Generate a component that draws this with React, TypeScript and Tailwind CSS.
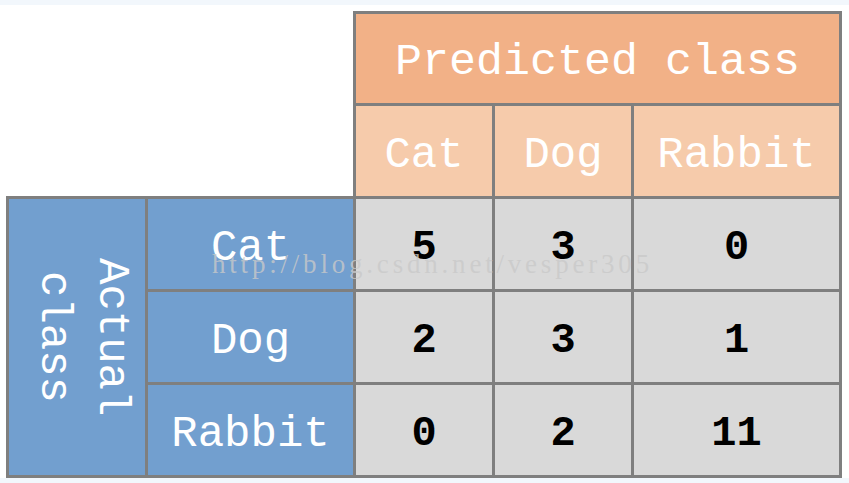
const cols = ["Cat", "Dog", "Rabbit"]
const rows: [string, number[]][] = [
  ["Cat", [5, 3, 0]],
  ["Dog", [2, 3, 1]],
  ["Rabbit", [0, 2, 11]],
]

const mono = "font-['Liberation_Mono','Courier_New',monospace]"

export default function App() {
  return (
    <div className="relative w-[849px] h-[483px] bg-white overflow-hidden">
      <div className="h-[5px] bg-[#f2f7fc]" />
      <div className="pl-[6px] pt-[6px]">
        <table className={`border-collapse table-fixed ${mono}`}>
          <colgroup>
            <col className="w-[139px]" />
            <col className="w-[208px]" />
            <col className="w-[139px]" />
            <col className="w-[139px]" />
            <col className="w-[208px]" />
          </colgroup>
          <tbody>
            <tr className="h-[92px]">
              <td colSpan={2} rowSpan={2} className="border-0 p-0" />
              <td
                colSpan={3}
                className="border-[3px] border-[#7f7f7f] bg-[#f2b187] text-center text-[45px] text-white p-0 pt-[8px]"
              >
                Predicted class
              </td>
            </tr>
            <tr className="h-[93px]">
              {cols.map((c) => (
                <td
                  key={c}
                  className="border-[3px] border-[#7f7f7f] bg-[#f6cbab] text-center text-[44px] text-white p-0 pt-[8px]"
                >
                  {c}
                </td>
              ))}
            </tr>
            {rows.map(([label, vals], i) => (
              <tr key={label} className="h-[93px]">
                {i === 0 && (
                  <td
                    rowSpan={3}
                    className="border-[3px] border-[#7f7f7f] bg-[#729fcf] text-white text-[44px] p-0 text-center"
                  >
                    <div className="flex justify-center items-center h-full pl-[12px]">
                      <span className="[writing-mode:vertical-rl] leading-[58px] text-center">
                        Actual
                        <br />
                        class
                      </span>
                    </div>
                  </td>
                )}
                <td className="border-[3px] border-[#7f7f7f] bg-[#729fcf] text-center text-[44px] text-white p-0 pt-[8px]">
                  {label}
                </td>
                {vals.map((v, j) => (
                  <td
                    key={j}
                    className="border-[3px] border-[#7f7f7f] bg-[#d9d9d9] text-center text-[42px] font-bold text-black p-0 pt-[8px]"
                  >
                    {v}
                  </td>
                ))}
              </tr>
            ))}
          </tbody>
        </table>
      </div>
      <div className="h-[5px] bg-[#f2f7fc] absolute left-0 right-0 bottom-0" />
      {/* watermark */}
      <div className="absolute left-[212px] top-[244px] font-['Liberation_Serif',serif] text-[27px] tracking-[3.8px] text-[#c9c9c9]/80 pointer-events-none whitespace-nowrap">
        http://blog.csdn.net/vesper305
      </div>
    </div>
  )
}
